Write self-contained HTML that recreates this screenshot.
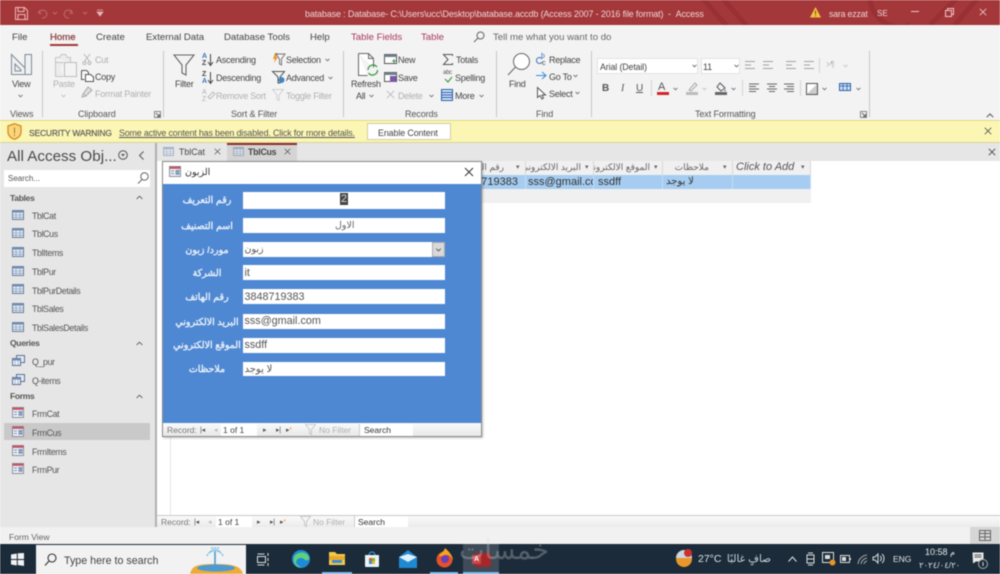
<!DOCTYPE html>
<html lang="en"><head><meta charset="utf-8"><title>Access</title>
<style>
*{box-sizing:border-box}
html,body{margin:0;padding:0;width:1000px;height:574px;overflow:hidden;background:#fff}
#r{position:relative;width:1000px;height:574px;overflow:hidden;font-family:"Liberation Sans","Noto Sans CJK SC",sans-serif;filter:blur(.4px)}
.b{position:absolute}
.t{position:absolute;white-space:nowrap;font-size:9px;letter-spacing:-.25px;line-height:14px;height:14px;color:#444;margin-top:1px}
.m0{margin-top:0}
.m1{margin-top:1px}
.k{font-size:9.6px;letter-spacing:0}
.gl{font-size:9px;letter-spacing:-.1px;color:#555;margin-top:0}
.g{color:#b0b0b0}
.n{font-size:8.8px;letter-spacing:-.35px;color:#555;margin-top:1.5px}
.h{font-weight:bold;color:#555;font-size:8.5px;letter-spacing:-.3px}
.l{position:absolute;white-space:nowrap;color:#e8f0fa;font-size:9.5px;line-height:14px;width:90px;text-align:center;left:162px;font-weight:bold;margin-top:1px}
.f{position:absolute;left:243px;width:202px;background:#fff;color:#444;font-size:10.8px;padding-left:1.5px;white-space:nowrap;overflow:hidden}
.sep{position:absolute;top:51px;height:66px;width:1px;background:#c6c6c6}
.th{position:absolute;top:161px;height:14px;background:#f0f0f0;border-right:1px solid #d8d8d8;font-size:9px;line-height:13px;color:#666;white-space:nowrap;overflow:hidden}
.ar{position:absolute;top:161px;font-size:7px;line-height:13px;color:#666}
.td{position:absolute;top:175px;height:14px;background:#a6cdf1;border-right:1px solid #c4dcf4;font-size:11px;line-height:15px;color:#333;white-space:nowrap;overflow:hidden;padding-left:2px}
svg{position:absolute;overflow:visible}
</style></head><body><div id="r">
<svg width="0" height="0" style="position:absolute"><defs>
<symbol id="tb" viewBox="0 0 12 10"><rect x=".5" y=".5" width="11" height="9" fill="#dfe8f4" stroke="#6a7f9c"/><rect x=".5" y=".5" width="11" height="2" fill="#6f8cb4"/><path d="M4 .5v9M8 .5v9M.5 5h11M.5 7.3h11" stroke="#7d92b0" stroke-width=".6" fill="none"/></symbol>
<symbol id="fm" viewBox="0 0 12 11"><rect x=".5" y=".5" width="11" height="10" fill="#eef0f4" stroke="#8a8f9c"/><rect x=".5" y=".5" width="11" height="2.4" fill="#c0596a"/><path d="M2 5h3M2 7.5h3M7 4.5h3v1.2H7zM7 7h3v1.2H7z" stroke="#5577a5" fill="none" stroke-width=".8"/></symbol>
<symbol id="qr" viewBox="0 0 13 11"><rect x="4.5" y=".5" width="8" height="7" fill="#dfe8f4" stroke="#5b7395"/><rect x=".5" y="3.5" width="8" height="7" fill="#eef2f8" stroke="#5b7395"/><rect x=".5" y="3.5" width="8" height="2" fill="#6f8cb4"/><path d="M3 5.5v5M6 5.5v5" stroke="#7d92b0" stroke-width=".6"/></symbol>
<symbol id="x" viewBox="0 0 10 10"><path d="M1 1l8 8M9 1l-8 8" stroke="currentColor" stroke-width="1" fill="none"/></symbol>
<symbol id="ch" viewBox="0 0 6 4"><path d="M.7.7L3 3l2.3-2.3" stroke="currentColor" stroke-width=".9" fill="none"/></symbol>
<symbol id="up" viewBox="0 0 8 5"><path d="M.7 4.2L4 1l3.3 3.2" stroke="#555" stroke-width="1" fill="none"/></symbol>
<symbol id="fn" viewBox="0 0 22 22"><path d="M1 1h20l-8 10v10l-4-2v-8z" fill="none" stroke="currentColor" stroke-width="1.1"/></symbol>
<symbol id="ln" viewBox="0 0 12 10"><path d="M1 1.5h10M1 5h6M1 8.5h10" stroke="#555" stroke-width="1.1" fill="none"/></symbol>
</defs></svg>

<!-- title bar -->
<div class="b" style="left:0;top:0;width:1000px;height:25px;background:#a4373a"></div>
<svg style="left:640px;top:0" width="340" height="25"><g fill="none" stroke="#993034" stroke-width="5"><path d="M60 -5l30 35M80 -5l30 35M230 -5a30 30 0 0 0 40 30M290 25l30-30M315 25l25-30"/></g></svg>
<svg style="left:15px;top:7px" width="13" height="13"><path d="M.5.5h9l3 3v9H.5zM3 .5v4h6v-4M3 12.5v-5h7v5" fill="none" stroke="#eeb8b8" stroke-width="1"/></svg>
<svg style="left:37px;top:7px" width="60" height="12"><path d="M3 3l-1.5 3 3 .6M2 6a4 4 0 1 1 3 5" fill="none" stroke="#c26a6c" stroke-width="1"/><path d="M16 5l2 2 2-2" fill="none" stroke="#c26a6c"/><path d="M34 3l1.5 3-3 .6M35 6a4 4 0 1 0-3 5" fill="none" stroke="#c26a6c"/><path d="M46 5l2 2 2-2" fill="none" stroke="#c26a6c"/></svg>
<svg style="left:96px;top:9px" width="8" height="8"><path d="M1 1h6M1 3h6l-3 4z" fill="#e6b5b5" stroke="#e6b5b5" stroke-width=".7"/></svg>
<div class="t m1" style="left:305px;top:6px;color:#eed3d3;font-size:9px;letter-spacing:-.15px">batabase : Database- C:\Users\ucc\Desktop\batabase.accdb (Access 2007 - 2016 file format) &nbsp;- &nbsp;Access</div>
<svg style="left:810px;top:7px" width="11" height="11"><path d="M5.5 0L11 10.5H0z" fill="#f3c33c"/><path d="M5.5 3.5v4M5.5 8.4v1" stroke="#7a4a20" stroke-width="1"/></svg>
<div class="t m1" style="left:829px;top:6px;color:#eed3d3;font-size:8.8px;letter-spacing:-.2px">sara ezzat</div>
<div class="t m1" style="left:877px;top:6px;color:#eed3d3;font-size:8px;letter-spacing:0">SE</div>
<div class="b" style="left:911px;top:11px;width:8px;height:1px;background:#eec5c5"></div>
<svg style="left:945px;top:8px" width="9" height="9"><path d="M.5 2.5h6v6h-6zM2.5 2.5v-2h6v6h-2" fill="none" stroke="#eec5c5"/></svg>
<svg style="left:979px;top:8px;color:#eec5c5" width="8" height="8"><use href="#x" width="8" height="8"/></svg>

<!-- ribbon -->
<div class="b" style="left:0;top:25px;width:1000px;height:96px;background:#f3f3f3"></div>
<div class="t k" style="left:12px;top:30px">File</div>
<div class="t k" style="left:50px;top:30px;color:#8a3a3c;-webkit-text-stroke:.2px #8a3a3c">Home</div>
<div class="b" style="left:50px;top:44px;width:28px;height:2px;background:#a4373a"></div>
<div class="t k" style="left:96px;top:30px">Create</div>
<div class="t k" style="left:146px;top:30px">External Data</div>
<div class="t k" style="left:224px;top:30px">Database Tools</div>
<div class="t k" style="left:310px;top:30px">Help</div>
<div class="t k" style="left:351px;top:30px;color:#a8385a">Table Fields</div>
<div class="t k" style="left:421px;top:30px;color:#a8385a">Table</div>
<svg style="left:473px;top:31px" width="12" height="12"><circle cx="7.5" cy="4.5" r="3.5" fill="none" stroke="#666"/><path d="M5 7l-4 4" stroke="#666"/></svg>
<div class="t k" style="left:493px;top:30px;color:#666">Tell me what you want to do</div>
<div class="sep" style="left:42px"></div><div class="sep" style="left:163px"></div><div class="sep" style="left:343px"></div><div class="sep" style="left:496px"></div><div class="sep" style="left:591px"></div><div class="sep" style="left:869px"></div>

<!-- views -->
<svg style="left:11px;top:54px" width="21" height="21"><path d="M.5.5L14 14v6.500H.5zM20.500 .5v20H14V.5z" fill="#eef0f2" stroke="#7f8a94"/><path d="M4 10l6 6v1H4z" fill="none" stroke="#7f8a94"/></svg>
<div class="t" style="left:12px;top:76px">View</div>
<svg style="left:18px;top:94px;color:#555" width="5" height="4"><use href="#ch" width="5" height="4"/></svg>
<div class="t gl" style="left:10px;top:107px">Views</div>
<!-- clipboard -->
<svg style="left:55px;top:54px" width="22" height="23"><path d="M.5 3.500h4l2-3h4l2 3h3v5M8.500 8.500H.5v14M.5 3.500v19h8" fill="#ececec" stroke="#c4c4c4"/><rect x="9.500" y="8.500" width="12" height="14" fill="#f3f3f3" stroke="#bcbcbc"/></svg>
<div class="t g" style="left:53px;top:76px">Paste</div>
<svg style="left:61px;top:94px;color:#b4b4b4" width="5" height="4"><use href="#ch" width="5" height="4"/></svg>
<svg style="left:83px;top:54px" width="9" height="11"><path d="M1 0l6 8M7 0L1 8" stroke="#b8b8b8" fill="none"/><circle cx="1.500" cy="9" r="1.500" fill="none" stroke="#b8b8b8"/><circle cx="6.500" cy="9" r="1.500" fill="none" stroke="#b8b8b8"/></svg>
<div class="t g" style="left:95px;top:52px">Cut</div>
<svg style="left:81px;top:70px" width="13" height="12"><path d="M.5.5h5l2 2v2M.5.5v9h3" fill="#fff" stroke="#555"/><path d="M4.500 4.500h5l3 2.500v4.500h-8z" fill="#fff" stroke="#555"/></svg>
<div class="t" style="left:95px;top:69px">Copy</div>
<svg style="left:82px;top:86px" width="11" height="12"><path d="M1 8l5-7 4 3-6 6z" fill="#dedede" stroke="#aaa"/><path d="M1 8l-1 3 4-1" fill="none" stroke="#aaa"/></svg>
<div class="t g" style="left:95px;top:86px">Format Painter</div>
<div class="t gl" style="left:78px;top:107px">Clipboard</div>
<svg style="left:154px;top:111px" width="7" height="7"><path d="M.5.5h6v6h-6z" fill="none" stroke="#888"/><path d="M2 2l3.500 3.500M5.500 3v2.500H3" stroke="#666" fill="none"/></svg>
<!-- sort filter -->
<svg style="left:173px;top:54px;color:#666" width="22" height="22"><use href="#fn" width="22" height="22"/></svg>
<div class="t" style="left:175px;top:76px">Filter</div>
<div class="t m0" style="left:202px;top:53px;font-size:7px;line-height:7px;height:16px;font-weight:bold;color:#3a72c0">A<br><span style="color:#444">Z</span></div>
<div class="b" style="left:210px;top:54px;width:1px;height:11px;background:#444"></div>
<svg style="left:208px;top:62px" width="5" height="4"><path d="M0 0l2.500 3.500L5 0" fill="none" stroke="#444"/></svg>
<div class="t" style="left:216px;top:52px">Ascending</div>
<div class="t m0" style="left:202px;top:71px;font-size:7px;line-height:7px;height:16px;font-weight:bold;color:#444">Z<br><span style="color:#3a72c0">A</span></div>
<div class="b" style="left:210px;top:72px;width:1px;height:11px;background:#444"></div>
<svg style="left:208px;top:80px" width="5" height="4"><path d="M0 0l2.500 3.500L5 0" fill="none" stroke="#444"/></svg>
<div class="t" style="left:216px;top:70px">Descending</div>
<div class="t g m0" style="left:202px;top:89px;font-size:7px;line-height:7px;height:16px">A<br>Z</div>
<svg style="left:207px;top:90px" width="8" height="10"><path d="M1 7l5-5 2 2-5 5z" fill="none" stroke="#bbb"/></svg>
<div class="t g" style="left:216px;top:88px">Remove Sort</div>
<svg style="left:272px;top:53px" width="13" height="12"><path d="M3 0h3L4 4h2L2 10l1-4H1z" fill="#e79a2c"/><path d="M4 1h9L9.500 6v6L7.500 11V6z" fill="none" stroke="#777"/></svg>
<div class="t" style="left:286px;top:52px">Selection</div>
<svg style="left:325px;top:58px;color:#555" width="5" height="4"><use href="#ch" width="5" height="4"/></svg>
<svg style="left:272px;top:71px" width="13" height="13"><path d="M.5.5h12L8 6v6H6V6z" fill="none" stroke="#555"/><circle cx="9.500" cy="9" r="3" fill="#3f84c8"/></svg>
<div class="t" style="left:286px;top:70px">Advanced</div>
<svg style="left:328px;top:76px;color:#555" width="5" height="4"><use href="#ch" width="5" height="4"/></svg>
<svg style="left:272px;top:89px;color:#bbb" width="12" height="12"><use href="#fn" width="12" height="12"/></svg>
<div class="t g" style="left:286px;top:88px">Toggle Filter</div>
<div class="t gl" style="left:231px;top:107px">Sort &amp; Filter</div>
<!-- records -->
<svg style="left:358px;top:53px" width="21" height="24"><path d="M.5.5h10l5 5v9M.5.5v22h9M10.500.5v5h5" fill="#fff" stroke="#666"/><path d="M10 17a5 5 0 0 1 9-3M19.500 17a5 5 0 0 1-9 3" fill="none" stroke="#3f9a4a" stroke-width="1.300"/></svg>
<div class="t" style="left:351px;top:76px">Refresh</div>
<div class="t" style="left:356px;top:88px">All</div>
<svg style="left:369px;top:94px;color:#555" width="5" height="4"><use href="#ch" width="5" height="4"/></svg>
<svg style="left:384px;top:54px" width="13" height="10"><rect x=".5" y=".5" width="12" height="9" fill="#fff" stroke="#555"/><rect x=".5" y=".5" width="12" height="2.500" fill="#6f7c8c"/><path d="M8 7h4M10 5v4" stroke="#3f9a4a"/></svg>
<div class="t" style="left:398px;top:52px">New</div>
<svg style="left:384px;top:72px" width="13" height="10"><rect x=".5" y=".5" width="12" height="9" fill="#fff" stroke="#555"/><rect x=".5" y=".5" width="12" height="2.500" fill="#6f7c8c"/><rect x="6" y="4" width="6" height="6" fill="#7b57a8"/></svg>
<div class="t" style="left:398px;top:70px">Save</div>
<svg style="left:386px;top:90px;color:#bbb" width="9" height="9"><use href="#x" width="9" height="9"/></svg>
<div class="t g" style="left:398px;top:88px">Delete</div>
<svg style="left:429px;top:94px;color:#555" width="5" height="4"><use href="#ch" width="5" height="4"/></svg>
<svg style="left:443px;top:54px" width="10" height="11"><path d="M9.500 2V.5H.5L5 5.500.5 10.500h9V9" fill="none" stroke="#555"/></svg>
<div class="t" style="left:456px;top:52px">Totals</div>
<div class="t m0" style="left:443px;top:69px;font-size:6px;line-height:8px;height:8px;color:#555">abc</div>
<svg style="left:444px;top:76px" width="9" height="7"><path d="M1 3l3 3 4-5" fill="none" stroke="#3f9a4a" stroke-width="1.200"/></svg>
<div class="t" style="left:455px;top:70px">Spelling</div>
<svg style="left:441px;top:89px" width="12" height="12"><rect x=".5" y=".5" width="11" height="11" fill="#cfe0f4" stroke="#2a5fa8"/><path d="M.5 3.500h11M.5 6h11M.5 8.500h11" stroke="#2a5fa8"/></svg>
<div class="t" style="left:455px;top:88px">More</div>
<svg style="left:479px;top:94px;color:#555" width="5" height="4"><use href="#ch" width="5" height="4"/></svg>
<div class="t gl" style="left:405px;top:107px">Records</div>
<!-- find -->
<svg style="left:507px;top:53px" width="23" height="23"><circle cx="14.500" cy="8.500" r="8" fill="#fff" stroke="#666"/><path d="M8.500 14l-7.500 8" stroke="#666"/></svg>
<div class="t" style="left:509px;top:76px">Find</div>
<svg style="left:535px;top:52px" width="12" height="14"><path d="M7 7a3 3 0 1 0 0 3" fill="none" stroke="#3a72c0"/><text x="6" y="6" font-size="7" fill="#3a72c0" font-family="Liberation Sans">b</text><text x="7" y="13" font-size="7" fill="#444" font-family="Liberation Sans">c</text></svg>
<div class="t" style="left:549px;top:52px">Replace</div>
<svg style="left:536px;top:71px" width="11" height="9"><path d="M0 4.500h10M6 1l4 3.500L6 8" fill="none" stroke="#3a8ad8"/></svg>
<div class="t" style="left:549px;top:69px">Go To</div>
<svg style="left:573px;top:74px;color:#555" width="5" height="4"><use href="#ch" width="5" height="4"/></svg>
<svg style="left:537px;top:87px" width="9" height="12"><path d="M.5.5v10l2.500-2 2 3.500 1.500-1L5 8h3.500z" fill="#fff" stroke="#555"/></svg>
<div class="t" style="left:549px;top:86px">Select</div>
<svg style="left:575px;top:91px;color:#555" width="5" height="4"><use href="#ch" width="5" height="4"/></svg>
<div class="t gl" style="left:536px;top:107px">Find</div>
<!-- text formatting -->
<div class="b" style="left:597px;top:58px;width:101px;height:16px;background:#fff;border:1px solid #e4e4e4"></div>
<div class="t m1" style="left:600px;top:59px;font-size:8.800px;letter-spacing:-.1px">Arial (Detail)</div>
<svg style="left:692px;top:64px;color:#444" width="5" height="4"><use href="#ch" width="5" height="4"/></svg>
<div class="b" style="left:701px;top:58px;width:39px;height:16px;background:#fff;border:1px solid #e4e4e4"></div>
<div class="t m1" style="left:703px;top:59px;font-size:9px">11</div>
<svg style="left:734px;top:64px;color:#444" width="5" height="4"><use href="#ch" width="5" height="4"/></svg>
<svg style="left:744px;top:60px;opacity:.5" width="12" height="10"><use href="#ln" width="12" height="10"/></svg>
<svg style="left:762px;top:60px;opacity:.5" width="12" height="10"><use href="#ln" width="12" height="10"/></svg>
<svg style="left:785px;top:60px;opacity:.5" width="12" height="10"><use href="#ln" width="12" height="10"/></svg>
<svg style="left:803px;top:60px;opacity:.5" width="12" height="10"><use href="#ln" width="12" height="10"/></svg>
<div class="b" style="left:819px;top:58px;width:1px;height:15px;background:#d4d4d4"></div>
<div class="t g m0" style="left:826px;top:58px;font-size:8px">&gt;¶</div>
<svg style="left:843px;top:64px;color:#bbb" width="5" height="4"><use href="#ch" width="5" height="4"/></svg>
<div class="t m1" style="left:602px;top:81px;font-weight:bold;font-size:10px;color:#555">B</div>
<div class="t m1" style="left:621px;top:81px;font-style:italic;font-size:10px;color:#555;font-family:'Liberation Serif',serif">I</div>
<div class="t m1" style="left:636px;top:81px;text-decoration:underline;font-size:10px;color:#555">U</div>
<div class="b" style="left:651px;top:80px;width:1px;height:16px;background:#d4d4d4"></div>
<div class="t m0" style="left:658px;top:80px;font-size:11px;color:#555">A</div>
<div class="b" style="left:657px;top:92px;width:12px;height:3px;background:#d0242c"></div>
<svg style="left:673px;top:87px;color:#555" width="5" height="4"><use href="#ch" width="5" height="4"/></svg>
<svg style="left:686px;top:82px" width="12" height="10"><path d="M3 8l6-7 2 2-6 6z" fill="none" stroke="#aaa"/></svg>
<div class="b" style="left:686px;top:92px;width:12px;height:3px;background:#bbb"></div>
<svg style="left:702px;top:87px;color:#bbb" width="5" height="4"><use href="#ch" width="5" height="4"/></svg>
<svg style="left:715px;top:82px" width="12" height="10"><path d="M5 1l5 5-4 3-4-4z" fill="none" stroke="#555"/><path d="M10 7l1 2-2 0z" fill="#3a72c0"/></svg>
<div class="b" style="left:715px;top:92px;width:12px;height:3px;background:#666"></div>
<svg style="left:731px;top:87px;color:#555" width="5" height="4"><use href="#ch" width="5" height="4"/></svg>
<div class="b" style="left:742px;top:80px;width:1px;height:16px;background:#d4d4d4"></div>
<svg style="left:749px;top:83px" width="11" height="10"><path d="M0 1h10M0 3.500h7M0 6h10M0 8.500h7" stroke="#666" fill="none"/></svg>
<svg style="left:767px;top:83px" width="11" height="10"><path d="M0 1h10M2 3.500h6M0 6h10M2 8.500h6" stroke="#666" fill="none"/></svg>
<svg style="left:784px;top:83px" width="11" height="10"><path d="M0 1h10M3 3.500h7M0 6h10M3 8.500h7" stroke="#666" fill="none"/></svg>
<div class="b" style="left:800px;top:80px;width:1px;height:16px;background:#d4d4d4"></div>
<svg style="left:806px;top:83px" width="12" height="12"><rect x=".5" y=".5" width="11" height="11" fill="#fff" stroke="#555"/><path d="M1 11L11 1v10z" fill="#ccc"/></svg>
<svg style="left:822px;top:87px;color:#555" width="5" height="4"><use href="#ch" width="5" height="4"/></svg>
<svg style="left:839px;top:83px" width="12" height="8"><rect x=".5" y=".5" width="11" height="7" fill="#cfe0f4" stroke="#2a5fa8"/><path d="M.5 3h11M4 .5v7M8 .5v7" stroke="#2a5fa8" stroke-width=".8"/></svg>
<svg style="left:856px;top:87px;color:#555" width="5" height="4"><use href="#ch" width="5" height="4"/></svg>
<div class="t gl" style="left:695px;top:107px">Text Formatting</div>
<svg style="left:860px;top:111px" width="7" height="7"><path d="M.5.5h6v6h-6z" fill="none" stroke="#888"/><path d="M2 2l3.500 3.500M5.500 3v2.500H3" stroke="#666" fill="none"/></svg>
<svg style="left:986px;top:113px" width="8" height="5"><use href="#up" width="8" height="5"/></svg>

<!-- security bar -->
<div class="b" style="left:0;top:120px;width:1000px;height:23px;background:#fbf6b4;border-top:1px solid #e2d98a;border-bottom:1px solid #d8d29a"></div>
<svg style="left:7px;top:123px" width="15" height="17"><path d="M7.500.7L14 3v6c0 3.500-3 6-6.500 7.300C4 15 1 12.500 1 9V3z" fill="#f8d77c" stroke="#d98a22" stroke-width="1.300"/><path d="M7.500 4.500v6M7.500 11.500v1.500" stroke="#b5731e"/></svg>
<div class="t m1" style="left:29px;top:125px;font-size:8.500px;letter-spacing:-.2px;color:#555;-webkit-text-stroke:.15px #555">SECURITY WARNING</div>
<div class="t m1" style="left:119px;top:125px;font-size:8.900px;letter-spacing:-.15px;color:#555;text-decoration:underline">Some active content has been disabled. Click for more details.</div>
<div class="b" style="left:367px;top:123px;width:84px;height:17px;background:#fff;border:1px solid #d2cda2"></div>
<div class="t m1" style="left:378px;top:125px;font-size:8.900px;letter-spacing:-.1px">Enable Content</div>
<svg style="left:984px;top:127px;color:#555" width="8" height="8"><use href="#x" width="8" height="8"/></svg>

<!-- nav pane -->
<div class="b" style="left:0;top:143px;width:155px;height:384px;background:#e6e6e6"></div>
<div class="b" style="left:155px;top:143px;width:2px;height:384px;background:#b0b0b0"></div>
<div class="t m1" style="left:7px;top:146px;font-size:15.200px;letter-spacing:0;line-height:20px;height:20px;color:#4a4a4a">All Access Obj...</div>
<svg style="left:118px;top:150px" width="10" height="10"><circle cx="5" cy="5" r="4.300" fill="none" stroke="#555"/><path d="M3 4h4L5 6.500z" fill="#555"/></svg>
<svg style="left:139px;top:151px" width="5" height="9"><path d="M4.500.5L.5 4.500l4 4" fill="none" stroke="#555"/></svg>
<div class="b" style="left:4px;top:170px;width:146px;height:17px;background:#fff"></div>
<div class="t m0" style="left:8px;top:172px;font-size:8px;letter-spacing:0;color:#555">Search...</div>
<svg style="left:137px;top:172px" width="12" height="12"><circle cx="7.500" cy="4.500" r="3.700" fill="none" stroke="#666"/><path d="M5 7.500L1 11.500" stroke="#666"/></svg>

<div class="t h m0" style="left:10px;top:191px">Tables</div><svg style="left:136px;top:195px" width="7" height="5"><use href="#up" width="7" height="5"/></svg>
<svg style="left:12px;top:210px" width="12" height="10"><use href="#tb" width="12" height="10"/></svg><div class="t n" style="left:32px;top:207px">TblCat</div>
<svg style="left:12px;top:228px" width="12" height="10"><use href="#tb" width="12" height="10"/></svg><div class="t n" style="left:32px;top:225px">TblCus</div>
<svg style="left:12px;top:247px" width="12" height="10"><use href="#tb" width="12" height="10"/></svg><div class="t n" style="left:32px;top:244px">TblItems</div>
<svg style="left:12px;top:266px" width="12" height="10"><use href="#tb" width="12" height="10"/></svg><div class="t n" style="left:32px;top:263px">TblPur</div>
<svg style="left:12px;top:284px" width="12" height="10"><use href="#tb" width="12" height="10"/></svg><div class="t n" style="left:32px;top:282px">TblPurDetails</div>
<svg style="left:12px;top:303px" width="12" height="10"><use href="#tb" width="12" height="10"/></svg><div class="t n" style="left:32px;top:300px">TblSales</div>
<svg style="left:12px;top:322px" width="12" height="10"><use href="#tb" width="12" height="10"/></svg><div class="t n" style="left:32px;top:319px">TblSalesDetails</div>
<div class="t h" style="left:10px;top:335px">Queries</div><svg style="left:136px;top:341px" width="7" height="5"><use href="#up" width="7" height="5"/></svg>
<svg style="left:12px;top:355px" width="13" height="11"><use href="#qr" width="13" height="11"/></svg><div class="t n" style="left:32px;top:353px">Q_pur</div>
<svg style="left:12px;top:374px" width="13" height="11"><use href="#qr" width="13" height="11"/></svg><div class="t n" style="left:32px;top:372px">Q-items</div>
<div class="t h" style="left:10px;top:388px">Forms</div><svg style="left:136px;top:394px" width="7" height="5"><use href="#up" width="7" height="5"/></svg>
<div class="b" style="left:4px;top:423px;width:146px;height:17px;background:#c9c9c9"></div>
<svg style="left:12px;top:407px" width="12" height="11"><use href="#fm" width="12" height="11"/></svg><div class="t n" style="left:32px;top:405px">FrmCat</div>
<svg style="left:12px;top:426px" width="12" height="11"><use href="#fm" width="12" height="11"/></svg><div class="t n" style="left:32px;top:424px">FrmCus</div>
<svg style="left:12px;top:445px" width="12" height="11"><use href="#fm" width="12" height="11"/></svg><div class="t n" style="left:32px;top:443px">FrmItems</div>
<svg style="left:12px;top:463px" width="12" height="11"><use href="#fm" width="12" height="11"/></svg><div class="t n" style="left:32px;top:461px">FrmPur</div>

<!-- document area -->
<div class="b" style="left:157px;top:143px;width:843px;height:18px;background:#e6e6e6"></div>
<div class="b" style="left:227px;top:143px;width:70px;height:18px;background:#d4d4d4"></div>
<div class="b" style="left:227px;top:143px;width:70px;height:2px;background:#8f2a2c"></div>
<svg style="left:163px;top:147px;opacity:.55" width="11" height="9"><use href="#tb" width="11" height="9"/></svg>
<div class="t m0" style="left:179px;top:145px;font-size:8.800px;letter-spacing:0">TblCat</div>
<svg style="left:214px;top:148px;color:#555" width="7" height="7"><use href="#x" width="7" height="7"/></svg>
<svg style="left:233px;top:147px;opacity:.55" width="11" height="9"><use href="#tb" width="11" height="9"/></svg>
<div class="t m0" style="left:248px;top:145px;font-size:8.800px;font-weight:bold">TblCus</div>
<svg style="left:284px;top:148px;color:#555" width="7" height="7"><use href="#x" width="7" height="7"/></svg>
<svg style="left:988px;top:148px;color:#444" width="8" height="8"><use href="#x" width="8" height="8"/></svg>
<div class="b" style="left:157px;top:161px;width:14px;height:354px;border-right:1px solid #e6e6e6;background:#fff"></div>

<div class="b" style="left:170px;top:189px;width:641px;height:14px;background:#f0f0f0"></div>
<div class="th" dir="rtl" style="left:470px;width:56px;padding-right:21px">رقم الهاتف</div><div class="ar" style="left:516px">▾</div>
<div class="th" dir="rtl" style="left:526px;width:68px;padding-right:12px">البريد الالكتروني</div><div class="ar" style="left:585px">▾</div>
<div class="th" dir="rtl" style="left:594px;width:69px;padding-right:12px">الموقع الالكتروني</div><div class="ar" style="left:654px">▾</div>
<div class="th" dir="rtl" style="left:663px;width:70px;padding-right:23px">ملاحظات</div><div class="ar" style="left:723px">▾</div>
<div class="th" style="left:733px;width:78px;font-style:italic;font-size:11px;padding-left:3px;color:#555">Click to Add</div><div class="ar" style="left:801px">▾</div>
<div class="td" style="left:450px;width:76px;text-align:right;padding-right:7px">3848719383</div>
<div class="td" style="left:526px;width:68px">sss@gmail.com</div>
<div class="td" style="left:594px;width:69px;padding-left:4px">ssdff</div>
<div class="td" style="left:663px;width:70px;font-size:10px;padding-left:3px;line-height:14px">لا يوجد</div>
<div class="td" style="left:733px;width:78px"></div>

<!-- form -->
<div class="b" style="left:162px;top:161px;width:320px;height:276px;background:#fff;border:1px solid #8a8a8a;box-shadow:1px 1px 2px rgba(0,0,0,.25)"></div>
<div class="b" style="left:163px;top:184px;width:318px;height:239px;background:#4f88d2"></div>
<svg style="left:169px;top:166px" width="12" height="11"><use href="#fm" width="12" height="11"/></svg>
<div class="t m0" style="left:185px;top:166px;font-size:9.500px;color:#333">الزبون</div>
<svg style="left:464px;top:167px;color:#333" width="10" height="10"><use href="#x" width="10" height="10"/></svg>

<div class="l" style="top:193px">رقم التعريف</div>
<div class="l" style="top:219px">اسم التصنيف</div>
<div class="l" style="top:243px">مورد/ زبون</div>
<div class="l" style="top:266px">الشركة</div>
<div class="l" style="top:290px">رقم الهاتف</div>
<div class="l" style="top:315px">البريد الالكتروني</div>
<div class="l" style="top:338px">الموقع الالكتروني</div>
<div class="l" style="top:362px">ملاحظات</div>

<div class="f" style="top:192px;height:17px;line-height:15px;text-align:center;padding:0"><span style="background:#444;color:#ddd;padding:0 1px">2</span></div>
<div class="f" style="top:218px;height:15px;line-height:15px;text-align:center;font-size:9.500px;color:#666">الاول</div>
<div class="f" style="top:242px;height:15px;line-height:15px;font-size:9.500px;color:#555">زبون</div>
<div class="b" style="left:432px;top:242px;width:13px;height:15px;background:#d9d9d9;border:1px solid #aaa"></div>
<svg style="left:435px;top:248px;color:#555" width="7" height="4"><use href="#ch" width="7" height="4"/></svg>
<div class="f" style="top:265px;height:15px;line-height:16px;color:#555">it</div>
<div class="f" style="top:289px;height:15px;line-height:16px;color:#555">3848719383</div>
<div class="f" style="top:314px;height:15px;line-height:15px;color:#555">sss@gmail.com</div>
<div class="f" style="top:338px;height:15px;line-height:15px;color:#555">ssdff</div>
<div class="f" style="top:362px;height:14px;line-height:15px;font-size:10px;color:#555">لا يوجد</div>

<!-- form nav -->
<div class="b" style="left:163px;top:423px;width:318px;height:13px;background:linear-gradient(#fafafa,#e8e8e8)"></div>
<div class="t m0" style="left:167px;top:424px;font-size:8.500px;letter-spacing:0;line-height:13px;color:#777">Record:</div>
<div class="t m0" style="left:200px;top:424px;font-size:7px;line-height:13px;color:#555">|◂</div>
<div class="t m0" style="left:214px;top:424px;font-size:7px;line-height:13px;color:#bbb">◂</div>
<div class="b" style="left:221px;top:424px;width:36px;height:12px;background:#fff"></div>
<div class="t m0" style="left:223px;top:424px;font-size:8.500px;letter-spacing:0;line-height:13px">1 of 1</div>
<div class="t m0" style="left:263px;top:424px;font-size:7px;line-height:13px;color:#555">▸</div>
<div class="t m0" style="left:276px;top:424px;font-size:7px;line-height:13px;color:#555">▸|</div>
<div class="t m0" style="left:286px;top:424px;font-size:7px;line-height:13px;color:#555">▸<span style="color:#e8a040">*</span></div>
<svg style="left:305px;top:424px;color:#aaa" width="11" height="11"><use href="#fn" width="11" height="11"/></svg>
<div class="t g m0" style="left:319px;top:424px;font-size:8.500px;letter-spacing:0;line-height:13px">No Filter</div>
<div class="b" style="left:359px;top:424px;width:54px;height:12px;background:#fff;border-left:1px solid #ccc"></div>
<div class="t m0" style="left:364px;top:424px;font-size:8.500px;letter-spacing:0;line-height:13px;color:#333">Search</div>

<!-- doc nav -->
<div class="b" style="left:157px;top:515px;width:843px;height:12px;background:linear-gradient(#fafafa,#ebebeb);border-top:1px solid #c8c8c8"></div>
<div class="t m0" style="left:161px;top:516px;font-size:8.500px;letter-spacing:0;line-height:13px;color:#777">Record:</div>
<div class="t m0" style="left:194px;top:516px;font-size:7px;line-height:13px;color:#555">|◂</div>
<div class="t m0" style="left:208px;top:516px;font-size:7px;line-height:13px;color:#bbb">◂</div>
<div class="b" style="left:216px;top:516px;width:36px;height:11px;background:#fff"></div>
<div class="t m0" style="left:218px;top:516px;font-size:8.500px;letter-spacing:0;line-height:13px">1 of 1</div>
<div class="t m0" style="left:257px;top:516px;font-size:7px;line-height:13px;color:#555">▸</div>
<div class="t m0" style="left:270px;top:516px;font-size:7px;line-height:13px;color:#555">▸|</div>
<div class="t m0" style="left:280px;top:516px;font-size:7px;line-height:13px;color:#555">▸<span style="color:#e8a040">*</span></div>
<svg style="left:300px;top:516px;color:#aaa" width="11" height="11"><use href="#fn" width="11" height="11"/></svg>
<div class="t g m0" style="left:313px;top:516px;font-size:8.500px;letter-spacing:0;line-height:13px">No Filter</div>
<div class="b" style="left:354px;top:516px;width:54px;height:11px;background:#fff;border-left:1px solid #ccc"></div>
<div class="t m0" style="left:358px;top:516px;font-size:8.500px;letter-spacing:0;line-height:13px;color:#333">Search</div>

<!-- status bar -->
<div class="b" style="left:0;top:527px;width:1000px;height:17px;background:#f1f1f1"></div>
<div class="t m1" style="left:9px;top:529px;font-size:8.500px;letter-spacing:0;color:#666">Form View</div>
<div class="b" style="left:970px;top:527px;width:30px;height:17px;background:#d6d6d6"></div>
<svg style="left:979px;top:530px" width="12" height="11"><rect x=".5" y=".5" width="11" height="10" fill="none" stroke="#666"/><path d="M.5 3.500h11M.5 7h11M6 .5v10" stroke="#666"/></svg>

<!-- taskbar -->
<div class="b" style="left:0;top:544px;width:1000px;height:30px;background:#1b2b3a"></div>
<svg style="left:11px;top:553px" width="13" height="13"><path d="M0 1.500l5.800-1v5.500H0zM6.800.3L13 0v6H6.800zM0 7h5.800v5.500L0 11.500zM6.800 7H13v6l-6.200-1z" fill="#f2f2f2"/></svg>
<div class="b" style="left:36px;top:545px;width:210px;height:29px;background:#f2f2f2"></div>
<svg style="left:44px;top:553px" width="13" height="13"><circle cx="8" cy="5" r="4" fill="none" stroke="#333" stroke-width="1.100"/><path d="M5 8l-4 4.500" stroke="#333" stroke-width="1.100"/></svg>
<div class="t" style="left:64px;top:553px;font-size:10.700px;letter-spacing:0;color:#444">Type here to search</div>
<svg style="left:186px;top:545px" width="60" height="29"><path d="M4 29c1-4 3-7 6-8 5-2 13-2 19-2s15 0 20 2c4 1 7 4 8 8z" fill="#efab3a"/><ellipse cx="30" cy="23" rx="19" ry="3.500" fill="#4d9ad0"/><path d="M29 21V6" stroke="#4d9ad0" stroke-width="1.600"/><path d="M24 7c2-3 8-3 10 0M21 11c1-3 4-5 8-5 4 0 7 2 8 5M25 3h8" fill="none" stroke="#7cc0e4" stroke-width="1.500" stroke-dasharray="2 1"/></svg>
<svg style="left:257px;top:552px" width="13" height="14"><path d="M.5 2h7M.5 13h7" stroke="#ddd"/><rect x=".5" y="4.500" width="8" height="6" fill="none" stroke="#ddd"/><path d="M11 1v3M11 6v3M11 11v3" stroke="#ddd"/></svg>
<svg style="left:292px;top:550px" width="18" height="18"><circle cx="9" cy="9" r="9" fill="#1f8ad8"/><path d="M2 7c2-5 12-7 15 0 1 3-2 4-4 3-2-3-8-3-9 2 0 2 3 5 6 5-5 2-10-4-8-10z" fill="#5ed07c"/></svg>
<svg style="left:329px;top:551px" width="16" height="15"><path d="M0 1h6l2 2h8v11H0z" fill="#f6c84c"/><rect y="5" width="16" height="4" fill="#e9a92a"/><rect x="3" y="9" width="10" height="3" fill="#3d8fcf"/></svg>
<div class="b" style="left:322px;top:572px;width:30px;height:2px;background:#76b9ed"></div>
<svg style="left:364px;top:551px" width="16" height="16"><path d="M1 4h14v11a1 1 0 0 1-1 1H2a1 1 0 0 1-1-1z" fill="#eaf3fa"/><path d="M5 4a3 3 0 0 1 6 0" fill="none" stroke="#3d9ad8" stroke-width="1.200"/><rect x="5" y="7" width="3" height="3" fill="#e8532c"/><rect x="8" y="7" width="3" height="3" fill="#7cb82f"/><rect x="5" y="10" width="3" height="3" fill="#1e9ae0"/><rect x="8" y="10" width="3" height="3" fill="#f4b71e"/></svg>
<svg style="left:399px;top:550px" width="18" height="18"><path d="M0 7L9 0l9 7v11H0z" fill="#1f8ad2"/><path d="M0 7l9 5 9-5-9-3z" fill="#dff0fb"/></svg>
<svg style="left:436px;top:548px" width="17" height="20"><circle cx="8.500" cy="11.500" r="8" fill="#e8502c"/><circle cx="9" cy="11" r="4" fill="#6b3fb8"/><path d="M9 0c3 3 7 6 8 12-2-4-5-6-8-5-3 1-5 2-6 1 1-3 5-4 6-8z" fill="#f7a320"/></svg>
<div class="b" style="left:430px;top:572px;width:28px;height:2px;background:#76b9ed"></div>
<div class="b" style="left:463px;top:544px;width:36px;height:30px;background:#3e4b58"></div>
<div class="b" style="left:463px;top:572px;width:36px;height:2px;background:#76b9ed"></div>
<div class="b" style="left:475px;top:553px;width:16px;height:14px;background:#a4272a;border-radius:2px"></div>
<div class="b" style="left:472px;top:555px;width:9px;height:9px;background:#c8474a;color:#fff;font-size:7px;font-weight:bold;line-height:9px;text-align:center">A</div>
<div class="t m0" dir="rtl" style="left:445px;top:533px;width:118px;height:34px;line-height:34px;font-size:27px;letter-spacing:0;color:rgba(215,215,215,.3);text-align:center">خمسات</div>

<svg style="left:675px;top:549px" width="18" height="18"><circle cx="9" cy="10" r="8" fill="#e9972a"/><path d="M1 9a8 8 0 0 1 16 0z" fill="#cbd6e2"/><circle cx="13" cy="4" r="4" fill="#d0302c"/></svg>
<div class="t m0" style="left:698px;top:552px;font-size:10.500px;letter-spacing:0;color:#dfe3e8">27°C</div>
<div class="t m0" dir="rtl" style="left:726px;top:552px;width:46px;font-size:10.500px;letter-spacing:0;color:#cfd4da;text-align:center">صافٍ غالبًا</div>
<svg style="left:788px;top:556px" width="9" height="6"><path d="M.5 5.500L4.500 1l4 4.500" fill="none" stroke="#e5e5e5"/></svg>
<svg style="left:806px;top:552px" width="9" height="14"><rect x="1" y="3" width="7" height="8" fill="none" stroke="#ddd"/><path d="M2 1h5M2 13h5M1 7h7" stroke="#ddd"/></svg>
<svg style="left:822px;top:552px" width="14" height="14"><rect x=".5" y=".5" width="11" height="10" fill="none" stroke="#ddd"/><rect x="3" y="3" width="5" height="4" fill="#ddd"/><circle cx="10.500" cy="10.500" r="3" fill="#e9932a"/></svg>
<svg style="left:840px;top:555px" width="11" height="8"><rect x=".5" y=".5" width="9" height="7" fill="none" stroke="#ddd"/><rect x="2" y="2" width="4" height="4" fill="#ddd"/><path d="M10.500 3v2" stroke="#ddd"/></svg>
<svg style="left:858px;top:553px" width="10" height="12"><path d="M0 11a10 10 0 0 1 9-9M3 11a7 7 0 0 1 6-6M6 11a4 4 0 0 1 3-3" fill="none" stroke="#aaa"/></svg>
<svg style="left:873px;top:553px" width="11" height="11"><path d="M0 4h2l3-3v9L2 7H0z" fill="none" stroke="#ddd"/><path d="M7 3a3 3 0 0 1 0 5M9 1a6 6 0 0 1 0 9" fill="none" stroke="#ddd"/></svg>
<div class="t m0" style="left:893px;top:552px;font-size:8.500px;letter-spacing:0;color:#e2e6ea">ENG</div>
<div class="t m0" style="left:925px;top:545px;font-size:9px;letter-spacing:0;color:#e8ebee">10:58 <span style="font-size:8px">م</span></div>
<div class="t m0" style="left:919px;top:558px;font-size:8.500px;letter-spacing:0;color:#d8dce0">٢٠٢٤/٠٤/٢٠</div>
<svg style="left:972px;top:552px" width="16" height="17"><path d="M.5.5h11v9H4l-3 2z" fill="#e8e8e8"/><path d="M2.500 3h7M2.500 5h7" stroke="#555"/><circle cx="11" cy="12" r="4.500" fill="#1b2b3a" stroke="#aaa"/><path d="M11 10v4" stroke="#ddd"/></svg>
</div></body></html>
